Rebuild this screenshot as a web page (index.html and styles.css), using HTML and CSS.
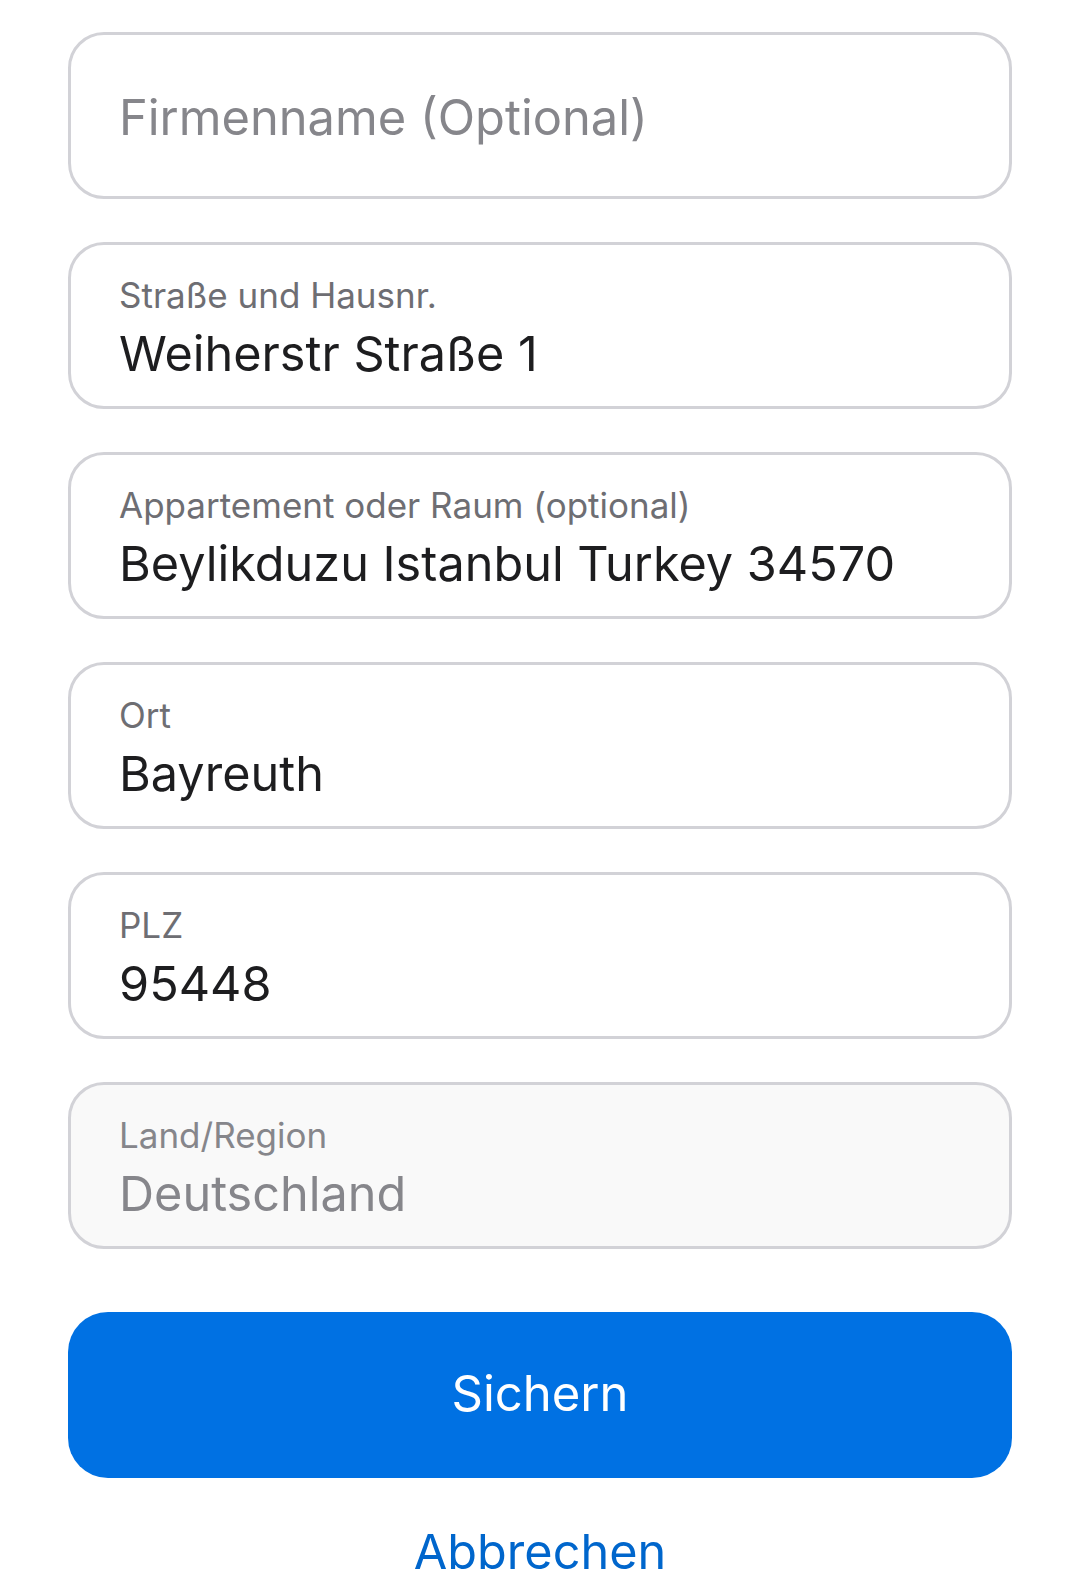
FILE: index.html
```html
<!DOCTYPE html>
<html>

<head>
    <meta charset="utf-8">
    <meta name="viewport" content="width=device-width">
    <title>Adresse bearbeiten</title>

    <link rel="stylesheet" href="styles.css">

</head>

<body>
    <div id="wrapper">
        <form class="address-form">
            <div class="field field-empty">
                <span class="placeholder">Firmenname (Optional)</span>
            </div>

            <div class="field">
                <label class="field-label">Straße und Hausnr.</label>
                <div class="field-value">Weiherstr Straße 1</div>
            </div>

            <div class="field">
                <label class="field-label">Appartement oder Raum (optional)</label>
                <div class="field-value">Beylikduzu Istanbul Turkey 34570</div>
            </div>

            <div class="field">
                <label class="field-label">Ort</label>
                <div class="field-value">Bayreuth</div>
            </div>

            <div class="field">
                <label class="field-label">PLZ</label>
                <div class="field-value">95448</div>
            </div>

            <div class="field field-disabled">
                <label class="field-label">Land/Region</label>
                <div class="field-value">Deutschland</div>
            </div>
        </form>

        <button class="save-button" type="button">Sichern</button>

        <a class="cancel-link" href="#">Abbrechen</a>
    </div>
</body>

</html>
```

FILE: styles.css
```css
html {
    font-family: Inter, "Noto Sans", sans-serif;
}

body {
    margin: 0;
    background-color: #fff;
}

#wrapper {
    width: 944px;
    margin: 0 0 0 68px;
    padding-top: 32px;
    display: flex;
    flex-flow: column;
}

.address-form {
    display: flex;
    flex-flow: column;
    gap: 43px;
}

.field {
    box-sizing: border-box;
    height: 167px;
    border: 3px solid #d2d2d7;
    border-radius: 36px;
    padding: 33px 48px 0;
    background-color: #fff;
}

.field-empty {
    display: flex;
    align-items: center;
    padding-top: 4px;
}

.placeholder {
    font-size: 48.8px;
    line-height: 49px;
    color: #86868b;
}

.field-label {
    display: block;
    font-size: 35px;
    line-height: 35px;
    color: #6e6e73;
}

.field-value {
    margin-top: 16px;
    font-size: 48.6px;
    line-height: 49px;
    color: #1d1d1f;
}

.field-disabled {
    background-color: #f9f9f9;
}

.field-disabled .field-label,
.field-disabled .field-value {
    color: #86868b;
}

.save-button {
    margin-top: 63px;
    height: 166px;
    border: 0;
    border-radius: 40px;
    background-color: #0071e3;
    color: #fff;
    font-family: inherit;
    font-size: 49px;
    padding: 0 0 4px;
}

.cancel-link {
    align-self: center;
    margin-top: 49px;
    font-size: 48.6px;
    line-height: 49px;
    color: #0066cc;
    text-decoration: none;
}
```
